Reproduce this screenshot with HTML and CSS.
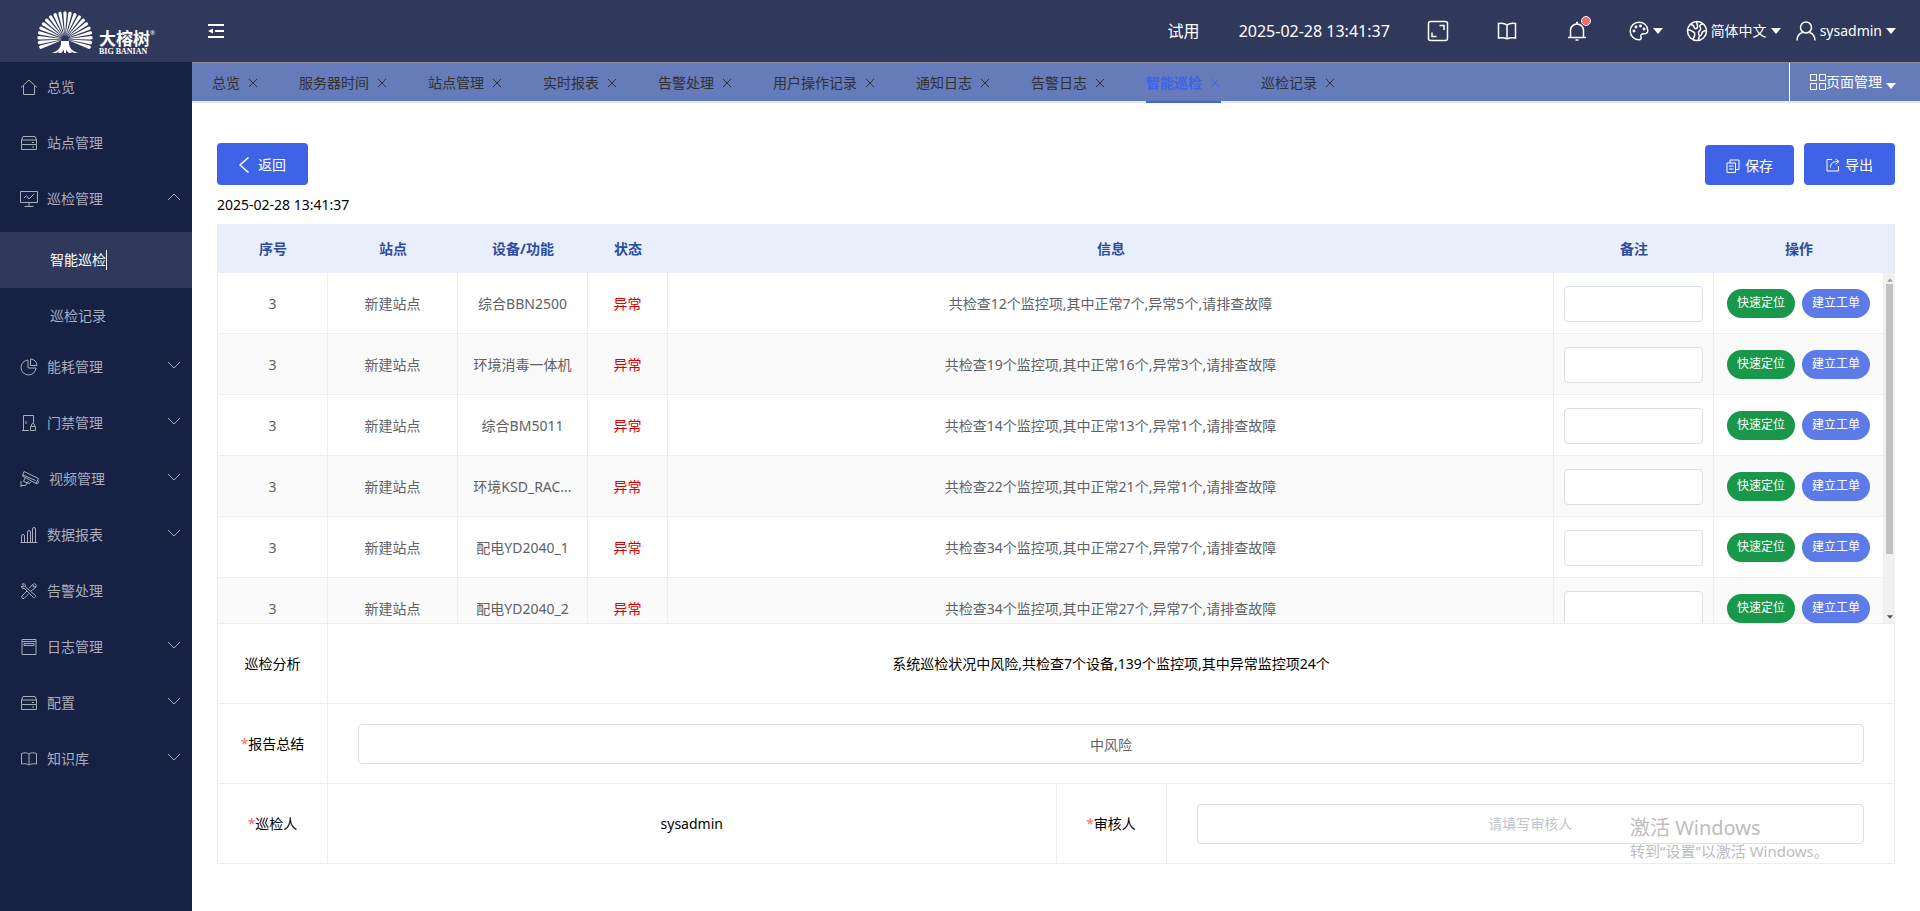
FILE: index.html
```html
<!DOCTYPE html>
<html lang="zh-CN">
<head>
<meta charset="utf-8">
<title>智能巡检</title>
<link rel="stylesheet" href="styles.css">
</head>
<body>
<svg class="defs" aria-hidden="true">
  <symbol id="chev" viewBox="0 0 14 8"><path d="M1 1l6 6 6-6"/></symbol>
  <symbol id="x" viewBox="0 0 10 10"><path d="M1 1l8 8M9 1L1 9"/></symbol>
  <symbol id="caret" viewBox="0 0 10 6"><path d="M0 0h10L5 6z"/></symbol>
  <symbol id="server" viewBox="0 0 18 18"><path d="M1.500 6l1.500-3.500h12l1.500 3.500M1.500 6h15v4.500h-15zM1.500 10.500v5h15v-5M12 8.500h2M12 13h2"/></symbol>
</svg>
<header class="topbar">
  <div class="logo">
    <svg class="tree" viewBox="0 0 56 44" id="tree" role="img" aria-label="大榕树"></svg>
    <div class="brand"><span class="brand-cn">大榕树<sup>®</sup></span><span class="brand-en">BIG BANIAN</span></div>
  </div>
  <button class="fold" aria-label="折叠菜单"><svg viewBox="0 0 16 16"><path d="M0 2h16M7 8h9M0 14h16" stroke-width="2"/><path d="M0 8l5-2.500v5z" class="solid"/></svg></button>
  <div class="tools">
    <span class="trial">试用</span>
    <time class="clock">2025-02-28 13:41:37</time>
    <button class="tool full" aria-label="全屏"><svg viewBox="0 0 22 22"><rect x="1.500" y="1.500" width="19" height="19" rx="2"/><path d="M12.500 5.500H17V10M5 12.500v4h4.500"/></svg></button>
    <button class="tool book" aria-label="帮助"><svg viewBox="0 0 20 20"><path d="M10 4v13.500M1.500 2.500c3-.5 6-.5 8.500 1.500 2.500-2 5.500-2 8.500-1.500V17c-3-.5-6-.5-8.500.8-2.500-1.300-5.500-1.300-8.500-.8z"/></svg></button>
    <button class="tool bell" aria-label="消息"><svg viewBox="0 0 20 20"><path d="M1 16.500h18M3.500 16V9.500a6.500 6.500 0 0 1 13 0V16M9 1.500h2M8.500 19h3"/></svg><i class="dot"></i></button>
    <button class="tool theme" aria-label="主题"><svg viewBox="0 0 20 20"><path d="M10 1.200A8.800 8.800 0 1 0 10 18.800c2 0 2.500-1.300 2-2.800-.7-2 .5-3.300 2.500-3.200 2.500.2 4.300-.8 4.300-3.300C18.500 4.500 15 1.200 10 1.200z"/><circle cx="5" cy="10" r=".7"/><circle cx="7" cy="6" r=".7"/><circle cx="11.500" cy="5" r=".7"/><circle cx="15" cy="8" r=".7"/></svg><svg class="caret"><use href="#caret"/></svg></button>
    <button class="tool lang"><svg viewBox="0 0 22 22"><circle cx="11" cy="11" r="9.500"/><path d="M2 10c2.500-.5 3.500 1 5.500 2s1.500 4-.5 7M4.500 4.500c1.500 0 3 .5 3.500 2.500s3 2.500 3.500 0S10 4 11 1.500M17 4c-3 0-4 2-2.500 4s-2 2-2 5 2 3.500 3 1.500-.5-3 4.500-4M13.500 15l-1 5"/></svg><span>简体中文</span><svg class="caret"><use href="#caret"/></svg></button>
    <button class="tool user"><svg viewBox="0 0 20 20"><circle cx="10" cy="6.500" r="5.500"/><path d="M1 19.500c0-4.500 2.500-7 5.500-8M19 19.500c0-4.500-2.500-7-5.500-8"/></svg><span>sysadmin</span><svg class="caret"><use href="#caret"/></svg></button>
  </div>
</header>
<div class="shell">
  <nav class="side">
    <a class="item" href="#"><svg viewBox="0 0 18 18"><path d="M1 9.500L9 2l8 7.500M3.500 8v8.500h11V8"/></svg><span>总览</span></a>
    <a class="item" href="#"><svg><use href="#server"/></svg><span>站点管理</span></a>
    <a class="item" href="#"><svg viewBox="0 0 18 18"><path d="M.500 1.500h17v11H.500zM9 12.500v4M4.500 16.500h9M4 8l2.500-2.500L9 9l5-5"/></svg><span>巡检管理</span><svg class="arrow up"><use href="#chev"/></svg></a>
    <div class="sub">
      <a class="subitem on" href="#"><span>智能巡检</span></a>
      <a class="subitem" href="#"><span>巡检记录</span></a>
    </div>
    <a class="item" href="#"><svg viewBox="0 0 18 18"><path d="M8 2a7.500 7.500 0 1 0 8 8H8zM10.500 1v6.500H17A6.500 6.500 0 0 0 10.500 1z"/></svg><span>能耗管理</span><svg class="arrow"><use href="#chev"/></svg></a>
    <a class="item" href="#"><svg viewBox="0 0 18 18"><path d="M9 16.500H3.500v-15h10V9M2 16.500h3M6 7v3M10.500 12.500h5v4h-5zM11.500 12.500V11a1.500 1.500 0 0 1 3 0v1.500"/></svg><span>门禁管理</span><svg class="arrow"><use href="#chev"/></svg></a>
    <a class="item" href="#"><svg class="cam" viewBox="0 0 20 18"><path d="M4 1.500l14.500 7-2.500 5L2.500 6zM3 5l12.500 5.500M1 11v6M1 15.500h4.500l3-4.500M5 8l-1.500 3.500 6 2 1.500-2M15.500 13l2 .8 1.500-3"/></svg><span>视频管理</span><svg class="arrow"><use href="#chev"/></svg></a>
    <a class="item" href="#"><svg viewBox="0 0 18 18"><path d="M.500 16.500h17M1.500 16V10a1.500 1.500 0 0 1 3 0v6M7.500 16V6a1.500 1.500 0 0 1 3 0v10M12.500 16V3a1.500 1.500 0 0 1 3 0v13"/></svg><span>数据报表</span><svg class="arrow"><use href="#chev"/></svg></a>
    <a class="item" href="#"><svg viewBox="0 0 18 18"><path d="M2 2c2-1 4 .5 3.500 3l10 8.500a1.500 1.500 0 0 1-2 2L4.500 6.500C2 7 1 5 1.500 4L3.500 5 4.500 4zM16 4.500L13.500 5 13 2.500M13.500 2C15 1 17 3 16 5l-5 4M13 2l-4 4.500M7 9l-5 5c-1 2 .5 3 2 2.500l5-5"/></svg><span>告警处理</span></a>
    <a class="item" href="#"><svg viewBox="0 0 18 18"><path d="M2 1.500h14v15H2zM2 3.500h14M4 5.500h10v2H4z"/></svg><span>日志管理</span><svg class="arrow"><use href="#chev"/></svg></a>
    <a class="item" href="#"><svg><use href="#server"/></svg><span>配置</span><svg class="arrow"><use href="#chev"/></svg></a>
    <a class="item" href="#"><svg viewBox="0 0 18 18"><path d="M9 4v10.500M1.500 3.500C4 2.500 7 2.500 9 4c2-1.500 5-1.500 7.500-.5V14c-2.500-.5-5.500-.3-7.500 1-2-1.300-5-1.500-7.500-1z"/></svg><span>知识库</span><svg class="arrow"><use href="#chev"/></svg></a>
  </nav>
  <div class="main">
    <div class="tabbar">
      <div class="tabs">
        <a class="tab" href="#">总览<svg><use href="#x"/></svg></a>
        <a class="tab" href="#">服务器时间<svg><use href="#x"/></svg></a>
        <a class="tab" href="#">站点管理<svg><use href="#x"/></svg></a>
        <a class="tab" href="#">实时报表<svg><use href="#x"/></svg></a>
        <a class="tab" href="#">告警处理<svg><use href="#x"/></svg></a>
        <a class="tab" href="#">用户操作记录<svg><use href="#x"/></svg></a>
        <a class="tab" href="#">通知日志<svg><use href="#x"/></svg></a>
        <a class="tab" href="#">告警日志<svg><use href="#x"/></svg></a>
        <a class="tab on" href="#">智能巡检<svg><use href="#x"/></svg></a>
        <a class="tab" href="#">巡检记录<svg><use href="#x"/></svg></a>
      </div>
      <button class="pages"><svg viewBox="0 0 16 16"><path d="M.500.500h6v6h-6zM9.500.500h6v6h-6zM.500 9.500h6v6h-6zM9.500 9.500h6v6h-6z"/></svg><span>页面管理</span><svg class="caret"><use href="#caret"/></svg></button>
    </div>
    <main class="content">
      <div class="actions">
        <button class="btn back"><svg viewBox="0 0 10 16"><path d="M9.500 0.500L1 8l8.500 7.500"/></svg>返回</button>
        <button class="btn save"><svg viewBox="0 0 14 14"><path d="M1 4h8.500v9.500H1zM4 4V1h9v9.500H9.500M3 7h4.500M3 10h4.500"/></svg>保存</button>
        <button class="btn export"><svg viewBox="0 0 14 14"><path d="M6 1.500H1v11.500h11.500V8M4.500 9.500c0-4 2-6 7.500-6M9.500 1l3.500 2.500L9.500 6.500"/></svg>导出</button>
      </div>
      <time class="stamp">2025-02-28 13:41:37</time>
      <table class="grid head">
        <colgroup><col class="c1"><col class="c2"><col class="c2"><col class="c3"><col><col class="c4"><col class="c5"><col class="c6"></colgroup>
        <thead><tr><th>序号</th><th>站点</th><th>设备/功能</th><th>状态</th><th>信息</th><th>备注</th><th>操作</th><th></th></tr></thead>
      </table>
      <div class="scroll">
        <table class="grid rows">
          <colgroup><col class="c1"><col class="c2"><col class="c2"><col class="c3"><col><col class="c4"><col class="c5"></colgroup>
          <tbody>
            <tr><td>3</td><td>新建站点</td><td>综合BBN2500</td><td class="bad">异常</td><td>共检查12个监控项,其中正常7个,异常5个,请排查故障</td><td><input class="note" aria-label="备注"></td><td class="ops"><button class="pill go">快速定位</button><button class="pill new">建立工单</button></td></tr>
            <tr><td>3</td><td>新建站点</td><td>环境消毒一体机</td><td class="bad">异常</td><td>共检查19个监控项,其中正常16个,异常3个,请排查故障</td><td><input class="note" aria-label="备注"></td><td class="ops"><button class="pill go">快速定位</button><button class="pill new">建立工单</button></td></tr>
            <tr><td>3</td><td>新建站点</td><td>综合BM5011</td><td class="bad">异常</td><td>共检查14个监控项,其中正常13个,异常1个,请排查故障</td><td><input class="note" aria-label="备注"></td><td class="ops"><button class="pill go">快速定位</button><button class="pill new">建立工单</button></td></tr>
            <tr><td>3</td><td>新建站点</td><td>环境KSD_RAC...</td><td class="bad">异常</td><td>共检查22个监控项,其中正常21个,异常1个,请排查故障</td><td><input class="note" aria-label="备注"></td><td class="ops"><button class="pill go">快速定位</button><button class="pill new">建立工单</button></td></tr>
            <tr><td>3</td><td>新建站点</td><td>配电YD2040_1</td><td class="bad">异常</td><td>共检查34个监控项,其中正常27个,异常7个,请排查故障</td><td><input class="note" aria-label="备注"></td><td class="ops"><button class="pill go">快速定位</button><button class="pill new">建立工单</button></td></tr>
            <tr><td>3</td><td>新建站点</td><td>配电YD2040_2</td><td class="bad">异常</td><td>共检查34个监控项,其中正常27个,异常7个,请排查故障</td><td><input class="note" aria-label="备注"></td><td class="ops"><button class="pill go">快速定位</button><button class="pill new">建立工单</button></td></tr>
          </tbody>
        </table>
        <div class="bar"><svg class="caret upc"><use href="#caret"/></svg><div class="thumb"></div><svg class="caret"><use href="#caret"/></svg></div>
      </div>
      <table class="summary">
        <colgroup><col class="c1"><col><col class="c1"><col></colgroup>
        <tbody>
          <tr><th>巡检分析</th><td colspan="3">系统巡检状况中风险,共检查7个设备,139个监控项,其中异常监控项24个</td></tr>
          <tr><th><label for="sum"><i>*</i>报告总结</label></th><td colspan="3"><input id="sum" class="field" value="中风险"></td></tr>
          <tr><th><i>*</i>巡检人</th><td>sysadmin</td><th><label for="aud"><i>*</i>审核人</label></th><td><input id="aud" class="field" placeholder="请填写审核人"></td></tr>
        </tbody>
      </table>
    </main>
  </div>
</div>
<div class="watermark"><span class="wm1">激活 Windows</span><span class="wm2">转到“设置”以激活 Windows。</span></div>
<script src="tree.js"></script>
</body>
</html>
```
FILE: styles.css
```css
* { box-sizing: border-box; }
html { height: 100%; }
body { margin: 0; min-height: 100%; display: flex; flex-direction: column; position: relative; background: #fff; color: #000; font: 14px/20px "Noto Sans", "Noto Sans CJK SC", sans-serif; }
button, input { font: inherit; color: inherit; }
button { border: 0; background: none; padding: 0; cursor: pointer; }
a { color: inherit; text-decoration: none; }
svg { fill: none; stroke: currentColor; flex: none; }
.defs { position: absolute; width: 0; height: 0; }
.caret { width: 10px; height: 6px; fill: currentColor; stroke: none; }

.topbar { height: 62px; display: flex; align-items: center; background: #30395c; color: #fff; }
.logo { width: 192px; height: 62px; padding: 11px 0 0 37px; display: flex; gap: 6px; align-items: flex-start; }
.tree { width: 56px; height: 44px; }
.brand { display: flex; flex-direction: column; padding-top: 18px; }
.brand-cn { font-size: 17px; line-height: 20px; font-weight: 700; white-space: nowrap; }
.brand-cn sup { font-size: 6px; font-weight: 400; line-height: 1px; vertical-align: 10px; }
.brand-en { font: 700 8px/6px "Liberation Serif", serif; white-space: nowrap; }
.fold { margin-left: 16px; display: flex; }
.fold svg { width: 16px; height: 16px; }
.solid { fill: currentColor; stroke: none; }
.tools { margin-left: auto; margin-right: 24px; display: flex; align-items: center; }
.trial, .clock { font-size: 16px; }
.clock { margin-left: 39px; width: 158px; white-space: nowrap; }
.tool { position: relative; display: flex; align-items: center; stroke-width: 1.500; }
.tool > svg:first-child { width: 20px; height: 20px; }
.tool .caret { margin-left: 4px; }
.full { margin-left: 30px; }
.tool.full > svg:first-child, .tool.lang > svg:first-child { width: 22px; height: 22px; }
.book { margin-left: 48px; }
.bell { margin-left: 50px; }
.dot { position: absolute; right: -3px; top: -4px; width: 8px; height: 8px; border-radius: 50%; background: #f56c6c; outline: 1px solid #fff; }
.theme { margin-left: 42px; }
.lang { margin-left: 23px; gap: 3px; }
.tool.lang .caret { margin-left: 1px; }
.user { margin-left: 15px; gap: 4px; }
.tool.user .caret { margin-left: 0; }

.shell { flex: 1; display: flex; }
.side { width: 192px; flex: none; background: #162144; color: #a9adbc; display: flex; flex-direction: column; gap: 6px; }
.item { height: 50px; padding: 0 11px 0 20px; display: flex; align-items: center; gap: 9px; }
.item > svg:first-child { width: 18px; height: 18px; }
.item > svg.cam:first-child { width: 20px; }
.item .arrow { width: 14px; height: 8px; margin-left: auto; margin-bottom: 4px; }
.arrow.up { transform: rotate(180deg); }
.sub { margin: 2px 0 -8px; }
.subitem { height: 56px; padding-left: 50px; display: flex; align-items: center; }
.subitem.on { background: #30395c; color: #fff; }
.subitem.on span { border-right: 1px solid #fff; }

.main { flex: 1; min-width: 0; }
.tabbar { height: 41px; display: flex; background: #657bba; border-top: 1px solid #8b8c99; border-bottom: 2px solid #e4e7ed; }
.tabs { flex: 1; display: flex; gap: 40px; padding-left: 20px; color: #303133; }
.tab { height: 40px; display: flex; align-items: center; gap: 8px; white-space: nowrap; padding-right: 1px; }
.tab svg { width: 10px; height: 10px; }
.tab.on { color: #3e63e6; font-weight: 700; border-bottom: 2px solid #3e63e6; padding-top: 2px; }
.pages { display: flex; align-items: center; width: 131px; padding-left: 20px; border-left: 1px solid #fff; color: #fff; }
.pages svg:first-child { width: 16px; height: 16px; }
.pages .caret { margin: 8px 0 0 4px; }

.content { padding: 40px 25px 0; }
.actions { display: flex; align-items: flex-end; }
.btn { height: 42px; width: 91px; padding-top: 1px; display: flex; align-items: center; justify-content: center; gap: 5px; border-radius: 4px; background: #3e63e6; color: #fff; }
.btn svg { width: 14px; height: 14px; }
.back { gap: 9px; }
.btn.back svg { width: 10px; height: 16px; stroke-width: 1.500; }
.save { width: 89px; height: 40px; margin-left: auto; }
.export { margin-left: 10px; }
.stamp { display: block; padding: 10px 0 9px; }

table { width: 100%; table-layout: fixed; border-collapse: separate; border-spacing: 0; text-align: center; }
.c1 { width: 110px; } .c2 { width: 130px; } .c3 { width: 80px; } .c4 { width: 160px; } .c5 { width: 170px; } .c6 { width: 11px; }
.head { border-left: 1px solid #e9eefb; }
.head th { height: 49px; padding: 0; background: #e9eefb; color: #2c4c9e; }
.scroll { display: flex; height: 350px; overflow: hidden; border-left: 1px solid #ebeef5; }
.rows { flex: 1; width: auto; align-self: flex-start; color: #606266; }
.rows td { height: 61px; padding: 1px 10px 0; border-right: 1px solid #ebeef5; border-bottom: 1px solid #ebeef5; white-space: nowrap; }
.rows td:nth-child(3) { padding: 1px 0 0; }
.rows tr:nth-child(even) td { background: #fafafa; }
.rows .bad { color: #d90000; }
.note { display: block; width: 100%; height: 36px; border: 1px solid #dcdfe6; border-radius: 4px; background: #fff; padding: 0 10px; }
.rows .ops { padding: 0; }
.pill { width: 68px; height: 29px; border-radius: 15px; color: #fff; font-size: 12px; line-height: 16px; }
.go { background: #19984b; margin-right: 7px; }
.new { background: #5c7be8; }
.bar { width: 11px; background: #f1f1f1; display: flex; flex-direction: column; align-items: center; padding: 5px 0 4px; color: #505050; }
.bar .caret { width: 6px; height: 4px; }
.upc { transform: rotate(180deg); color: #a0a0a0; }
.thumb { width: 7px; height: 270px; margin: 2px 0 auto; background: #c1c1c1; }

.summary { border-left: 1px solid #ebeef5; border-top: 1px solid #ebeef5; }
.summary th, .summary td { height: 80px; padding: 0 30px; font-weight: 400; border-right: 1px solid #ebeef5; border-bottom: 1px solid #ebeef5; }
.summary th { padding: 0; }
.summary i { color: #f56c6c; font-style: normal; }
.field { display: block; width: 100%; height: 40px; border: 1px solid #dcdfe6; border-radius: 4px; background: #fff; text-align: center; color: #606266; }
.field::placeholder { color: #c0c4cc; opacity: 1; }

.watermark { position: absolute; right: 93px; bottom: 50px; width: 197px; display: flex; flex-direction: column; color: #bdbdbd; white-space: nowrap; pointer-events: none; }
.wm1 { font-size: 20px; line-height: 26px; }
.wm2 { font-size: 15px; line-height: 20px; }
```
FILE: tree.js
```js
const tree = document.getElementById('tree');
const NS = 'http://www.w3.org/2000/svg';
function add(d, cls) {
  const p = document.createElementNS(NS, 'path');
  p.setAttribute('d', d);
  p.setAttribute('class', cls);
  tree.appendChild(p);
}
const N = 20;
for (let k = 0; k <= N; k++) {
  const a = Math.PI * (1.12 - 1.24 * k / N);
  const c = Math.cos(a), s = -Math.sin(a);
  const nx = -s, ny = c;
  const x0 = 28 + c * 3, y0 = 28 + s * 3;
  const x1 = 28 + c * 26, y1 = 27 + s * 25;
  const w = 1.7;
  add(`M${x0} ${y0}L${x1 + nx * w} ${y1 + ny * w}A1.7 1.7 0 0 0 ${x1 - nx * w} ${y1 - ny * w}z`, 'solid');
}
add('M24 30h8c-.5 6 2 9.500 9 12h-4l-4-2 2 2h-3l-3-3v3h-2v-3l-3 3h-3l2-2-4 2h-4c7-2.500 9.500-6 9-12z', 'solid');
```
